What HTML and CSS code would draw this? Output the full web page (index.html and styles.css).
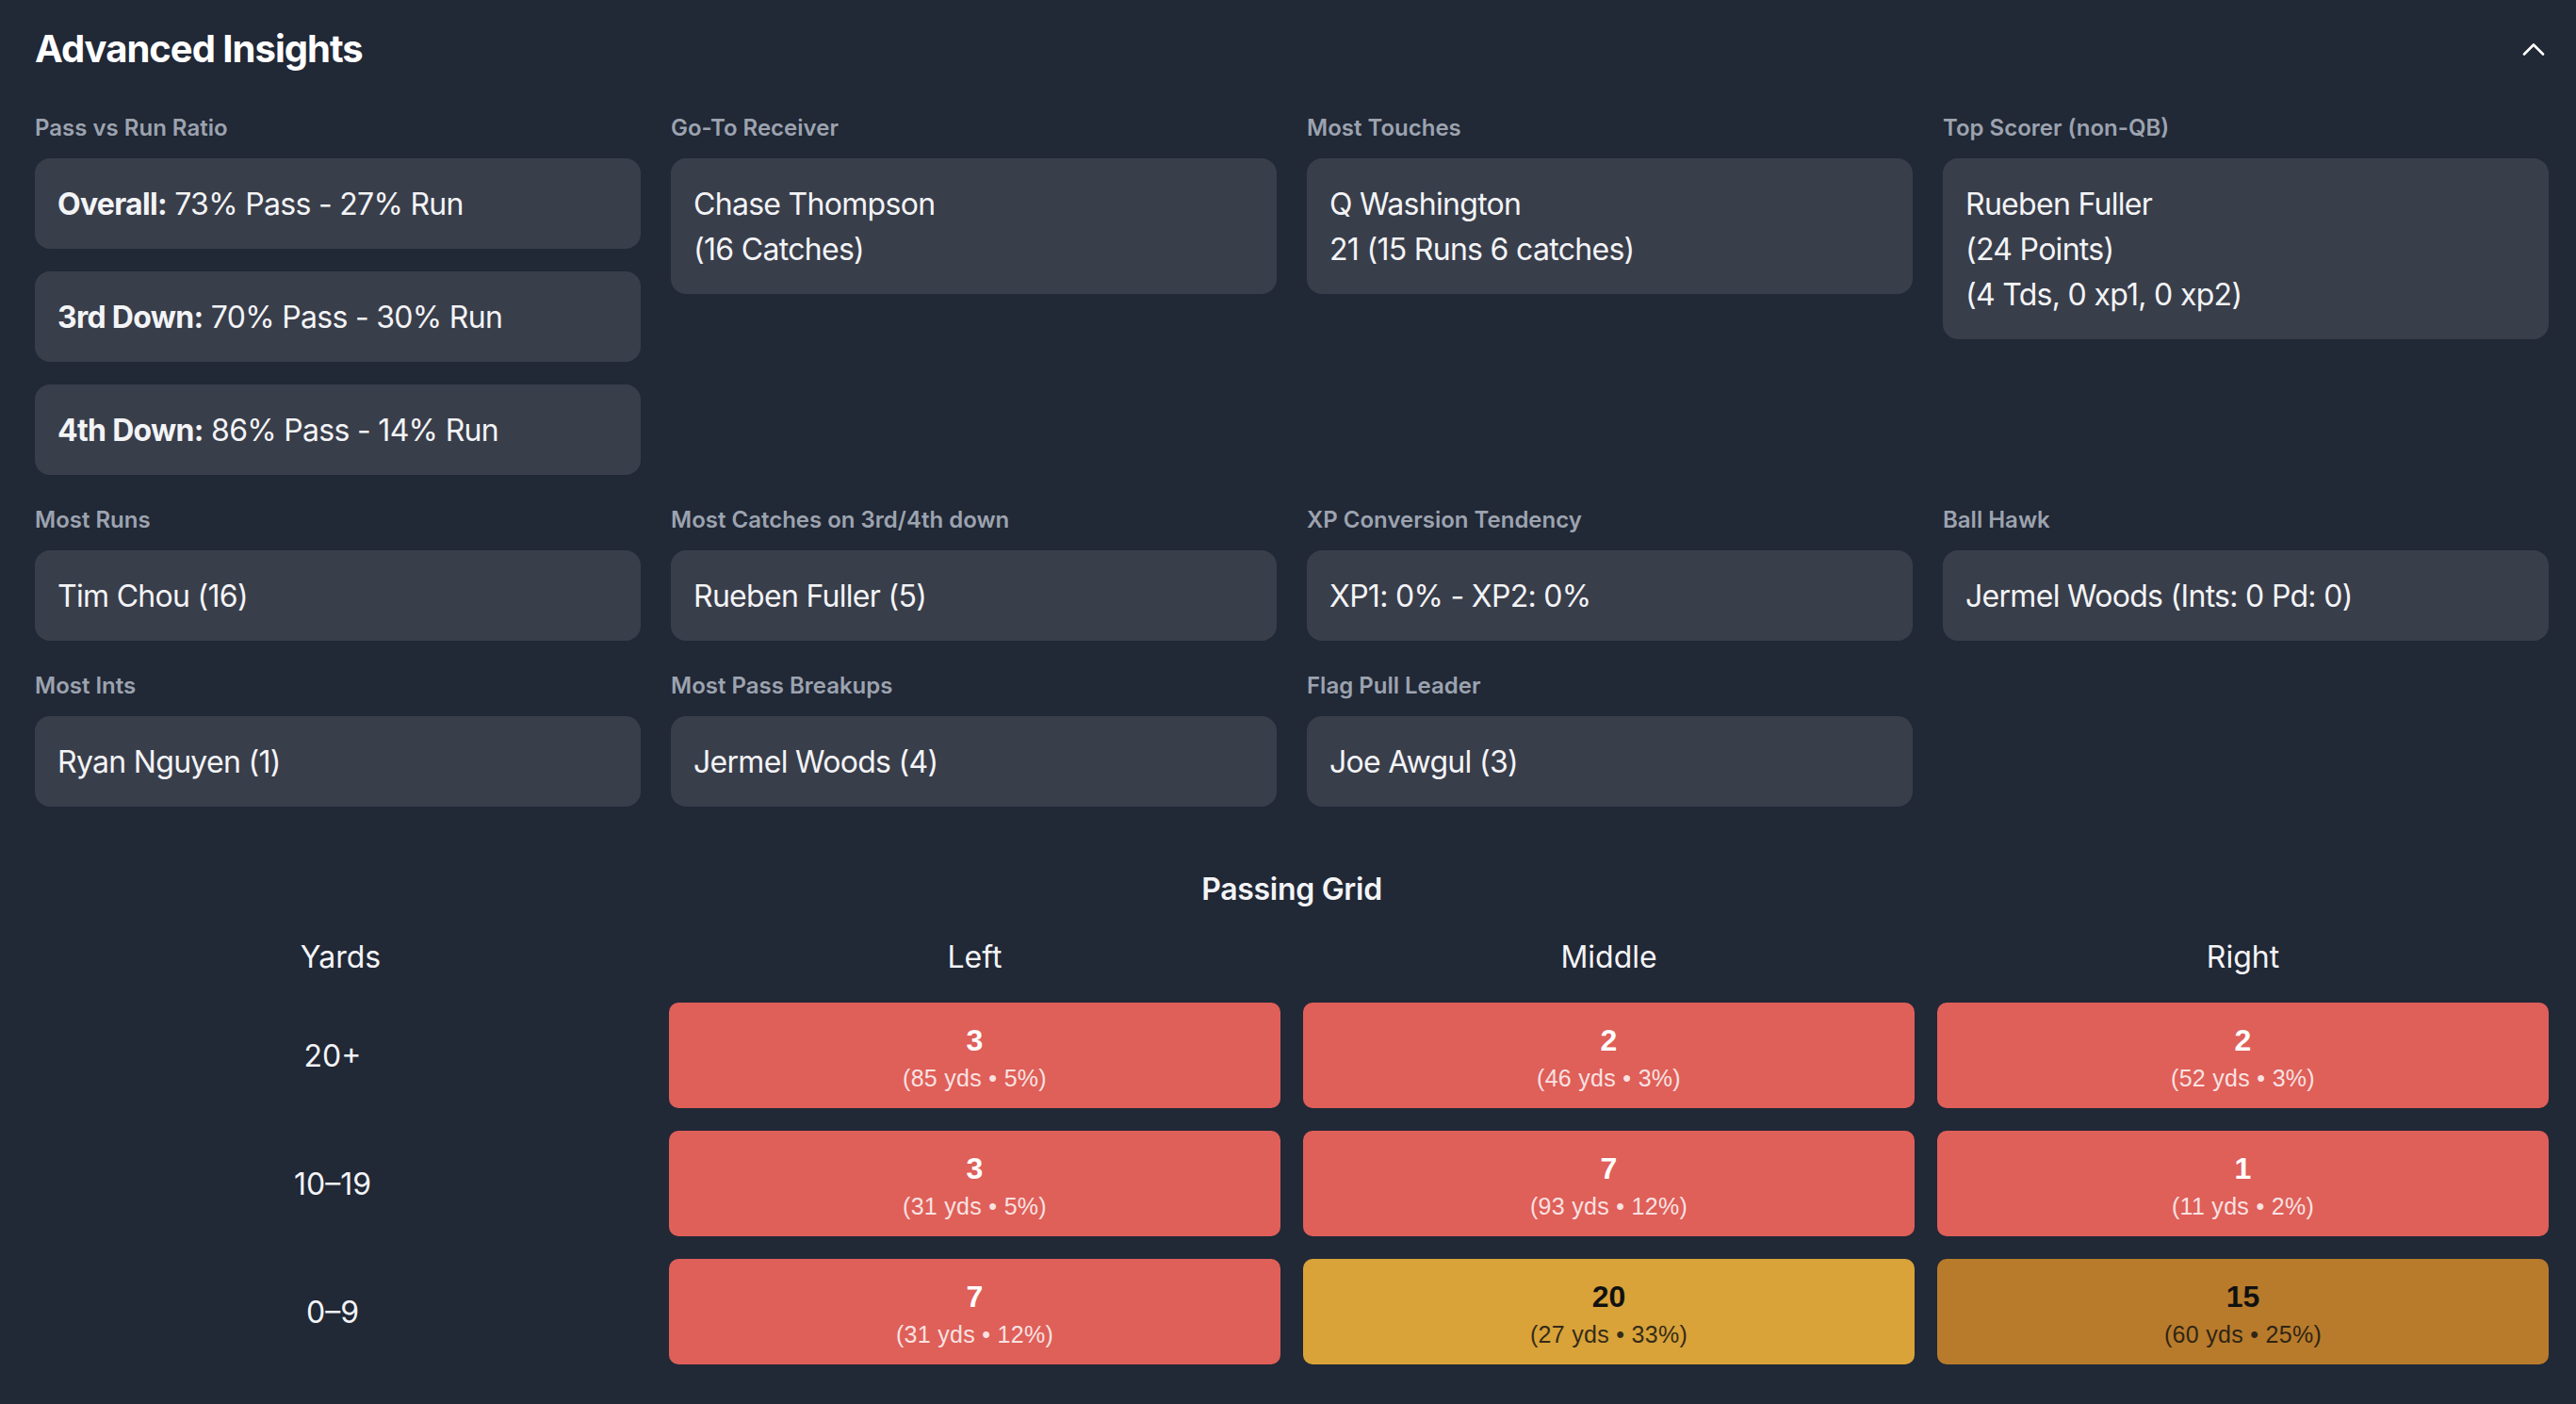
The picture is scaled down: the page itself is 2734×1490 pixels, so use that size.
FILE: index.html
```html
<!DOCTYPE html>
<html lang="en">
<head>
    <meta charset="UTF-8">
    <meta name="viewport" content="width=device-width, initial-scale=1.0">
    <title>Advanced Insights</title>
    <link rel="stylesheet" href="styles.css">
</head>
<body>
    <section class="insights">
        <!-- Panel header -->
        <header class="insights-header">
            <h2>Advanced Insights</h2>
            <button class="collapse-btn" aria-label="Collapse">
                <svg width="24" height="14" viewBox="0 0 24 14">
                    <polyline points="2,12.5 12,2.5 22,12.5" fill="none" stroke="#ffffff" stroke-width="2.6" stroke-linecap="round" stroke-linejoin="round"/>
                </svg>
            </button>
        </header>

        <!-- Stat cards -->
        <div class="insight-grid">
            <div class="insight">
                <div class="insight-label">Pass vs Run Ratio</div>
                <div class="insight-stack">
                    <div class="insight-box"><strong>Overall:</strong> 73% Pass - 27% Run</div>
                    <div class="insight-box"><strong>3rd Down:</strong> 70% Pass - 30% Run</div>
                    <div class="insight-box"><strong>4th Down:</strong> 86% Pass - 14% Run</div>
                </div>
            </div>
            <div class="insight">
                <div class="insight-label">Go-To Receiver</div>
                <div class="insight-box">Chase Thompson<br>(16 Catches)</div>
            </div>
            <div class="insight">
                <div class="insight-label">Most Touches</div>
                <div class="insight-box">Q Washington<br>21 (15 Runs 6 catches)</div>
            </div>
            <div class="insight">
                <div class="insight-label">Top Scorer (non-QB)</div>
                <div class="insight-box">Rueben Fuller<br>(24 Points)<br>(4 Tds, 0 xp1, 0 xp2)</div>
            </div>

            <div class="insight">
                <div class="insight-label">Most Runs</div>
                <div class="insight-box">Tim Chou (16)</div>
            </div>
            <div class="insight">
                <div class="insight-label">Most Catches on 3rd/4th down</div>
                <div class="insight-box">Rueben Fuller (5)</div>
            </div>
            <div class="insight">
                <div class="insight-label">XP Conversion Tendency</div>
                <div class="insight-box">XP1: 0% - XP2: 0%</div>
            </div>
            <div class="insight">
                <div class="insight-label">Ball Hawk</div>
                <div class="insight-box">Jermel Woods (Ints: 0 Pd: 0)</div>
            </div>

            <div class="insight">
                <div class="insight-label">Most Ints</div>
                <div class="insight-box">Ryan Nguyen (1)</div>
            </div>
            <div class="insight">
                <div class="insight-label">Most Pass Breakups</div>
                <div class="insight-box">Jermel Woods (4)</div>
            </div>
            <div class="insight">
                <div class="insight-label">Flag Pull Leader</div>
                <div class="insight-box">Joe Awgul (3)</div>
            </div>
        </div>

        <!-- Passing grid -->
        <div class="passing">
            <h3>Passing Grid</h3>
            <div class="zone-grid">
                <div class="zone-head">Yards</div>
                <div class="zone-head">Left</div>
                <div class="zone-head">Middle</div>
                <div class="zone-head">Right</div>

                <div class="zone-row">20+</div>
                <div class="zone cold"><span class="zone-count">3</span><span class="zone-meta">(85 yds • 5%)</span></div>
                <div class="zone cold"><span class="zone-count">2</span><span class="zone-meta">(46 yds • 3%)</span></div>
                <div class="zone cold"><span class="zone-count">2</span><span class="zone-meta">(52 yds • 3%)</span></div>

                <div class="zone-row">10–19</div>
                <div class="zone cold"><span class="zone-count">3</span><span class="zone-meta">(31 yds • 5%)</span></div>
                <div class="zone cold"><span class="zone-count">7</span><span class="zone-meta">(93 yds • 12%)</span></div>
                <div class="zone cold"><span class="zone-count">1</span><span class="zone-meta">(11 yds • 2%)</span></div>

                <div class="zone-row">0–9</div>
                <div class="zone cold"><span class="zone-count">7</span><span class="zone-meta">(31 yds • 12%)</span></div>
                <div class="zone hot"><span class="zone-count">20</span><span class="zone-meta">(27 yds • 33%)</span></div>
                <div class="zone warm"><span class="zone-count">15</span><span class="zone-meta">(60 yds • 25%)</span></div>
            </div>
        </div>
    </section>
</body>
</html>
```

FILE: styles.css
```css
body {
    margin: 0;
    background: #212836;
    color: #f3f4f6;
    font-family: Inter, "Noto Sans", sans-serif;
}

.insights {
    padding: 24px 29px 40px 37px;
}

.insights-header {
    display: flex;
    justify-content: space-between;
    align-items: center;
    height: 56px;
    margin-bottom: 40px;
}

.insights-header h2 {
    margin: 0;
    font-size: 40px;
    line-height: 56px;
    font-weight: 700;
    letter-spacing: -1px;
    color: #ffffff;
}

.collapse-btn {
    background: none;
    border: none;
    padding: 0 4px 0 0;
    cursor: pointer;
    display: flex;
    align-items: center;
}

.insight-grid {
    display: grid;
    grid-template-columns: repeat(4, 1fr);
    gap: 32px;
    align-items: start;
}

.insight-label {
    font-size: 24px;
    line-height: 32px;
    font-weight: 600;
    color: #9ca3af;
    margin-bottom: 16px;
}

.insight-stack {
    display: flex;
    flex-direction: column;
    gap: 24px;
}

.insight-box {
    background: #393e4b;
    border-radius: 16px;
    padding: 25px 24px 23px;
    font-size: 32px;
    line-height: 48px;
    letter-spacing: -0.7px;
    color: #f3f4f6;
}

.insight-box strong {
    font-weight: 700;
}

.passing {
    margin-top: 64px;
}

.passing h3 {
    margin: 0 0 24px;
    text-align: center;
    font-size: 32px;
    line-height: 48px;
    font-weight: 600;
    letter-spacing: -0.3px;
    color: #f3f4f6;
}

.zone-grid {
    display: grid;
    grid-template-columns: repeat(4, 1fr);
    gap: 24px;
}

.zone-head {
    text-align: center;
    font-size: 32px;
    line-height: 48px;
    color: #f3f4f6;
}

.zone-row {
    display: flex;
    align-items: center;
    justify-content: center;
    padding-right: 17px;
    font-size: 32px;
    color: #f3f4f6;
}

.zone {
    display: flex;
    flex-direction: column;
    align-items: center;
    padding: 16px;
    border-radius: 10px;
    font-family: "Liberation Sans", Arial, sans-serif;
}

.zone-count {
    font-size: 32px;
    line-height: 48px;
    font-weight: 700;
}

.zone-meta {
    font-size: 25px;
    line-height: 32px;
    letter-spacing: 0.3px;
    opacity: 0.82;
}

.zone.cold {
    background: #df5f59;
    color: #ffffff;
}

.zone.hot {
    background: #d9a339;
    color: #111111;
}

.zone.warm {
    background: #b87b2b;
    color: #111111;
}
```
